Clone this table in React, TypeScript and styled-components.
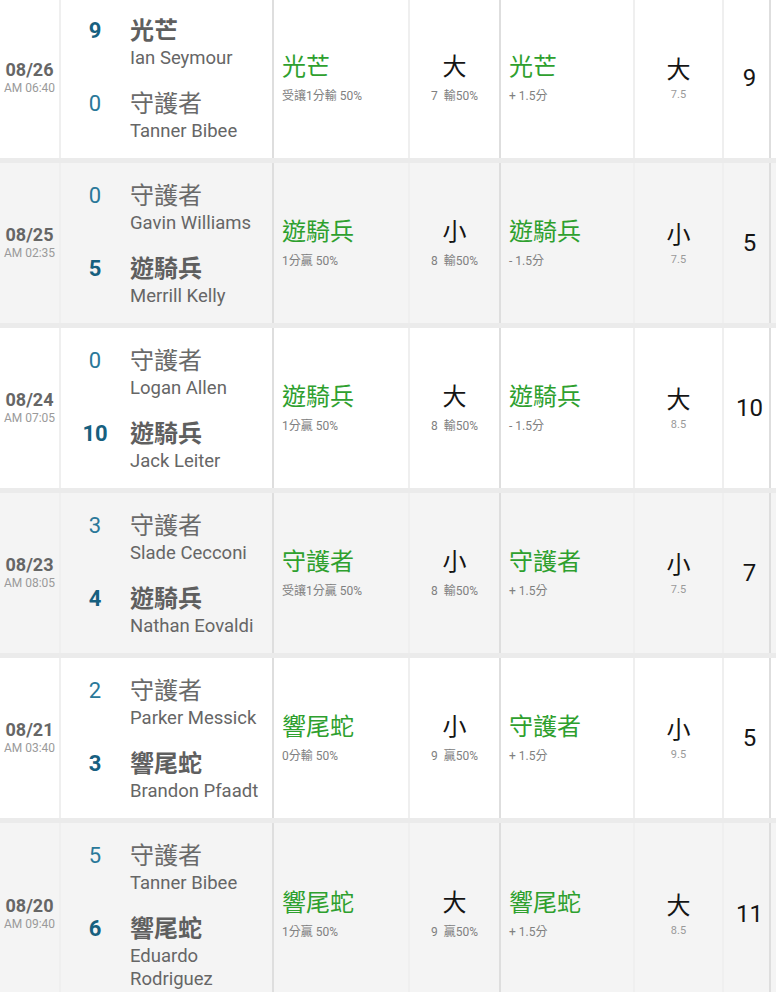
import * as React from "react";
import styled, { createGlobalStyle } from "styled-components";

interface Side {
  score: number;
  team: string;
  pitcher: string;
  won: boolean;
}

interface Game {
  date: string;
  time: string;
  away: Side;
  home: Side;
  spreadPick: string;
  spreadNote: string;
  totalPick: string;
  totalNote: string;
  linePick: string;
  lineNote: string;
  ouPick: string;
  ouLine: string;
  runs: number;
}

const games: Game[] = [
  {
    date: "08/26",
    time: "AM 06:40",
    away: { score: 9, team: "光芒", pitcher: "Ian Seymour", won: true },
    home: { score: 0, team: "守護者", pitcher: "Tanner Bibee", won: false },
    spreadPick: "光芒",
    spreadNote: "受讓1分輸 50%",
    totalPick: "大",
    totalNote: "7  輸50%",
    linePick: "光芒",
    lineNote: "+ 1.5分",
    ouPick: "大",
    ouLine: "7.5",
    runs: 9,
  },
  {
    date: "08/25",
    time: "AM 02:35",
    away: { score: 0, team: "守護者", pitcher: "Gavin Williams", won: false },
    home: { score: 5, team: "遊騎兵", pitcher: "Merrill Kelly", won: true },
    spreadPick: "遊騎兵",
    spreadNote: "1分贏 50%",
    totalPick: "小",
    totalNote: "8  輸50%",
    linePick: "遊騎兵",
    lineNote: "- 1.5分",
    ouPick: "小",
    ouLine: "7.5",
    runs: 5,
  },
  {
    date: "08/24",
    time: "AM 07:05",
    away: { score: 0, team: "守護者", pitcher: "Logan Allen", won: false },
    home: { score: 10, team: "遊騎兵", pitcher: "Jack Leiter", won: true },
    spreadPick: "遊騎兵",
    spreadNote: "1分贏 50%",
    totalPick: "大",
    totalNote: "8  輸50%",
    linePick: "遊騎兵",
    lineNote: "- 1.5分",
    ouPick: "大",
    ouLine: "8.5",
    runs: 10,
  },
  {
    date: "08/23",
    time: "AM 08:05",
    away: { score: 3, team: "守護者", pitcher: "Slade Cecconi", won: false },
    home: { score: 4, team: "遊騎兵", pitcher: "Nathan Eovaldi", won: true },
    spreadPick: "守護者",
    spreadNote: "受讓1分贏 50%",
    totalPick: "小",
    totalNote: "8  輸50%",
    linePick: "守護者",
    lineNote: "+ 1.5分",
    ouPick: "小",
    ouLine: "7.5",
    runs: 7,
  },
  {
    date: "08/21",
    time: "AM 03:40",
    away: { score: 2, team: "守護者", pitcher: "Parker Messick", won: false },
    home: { score: 3, team: "響尾蛇", pitcher: "Brandon Pfaadt", won: true },
    spreadPick: "響尾蛇",
    spreadNote: "0分輸 50%",
    totalPick: "小",
    totalNote: "9  贏50%",
    linePick: "守護者",
    lineNote: "+ 1.5分",
    ouPick: "小",
    ouLine: "9.5",
    runs: 5,
  },
  {
    date: "08/20",
    time: "AM 09:40",
    away: { score: 5, team: "守護者", pitcher: "Tanner Bibee", won: false },
    home: { score: 6, team: "響尾蛇", pitcher: "Eduardo Rodriguez", won: true },
    spreadPick: "響尾蛇",
    spreadNote: "1分贏 50%",
    totalPick: "大",
    totalNote: "9  贏50%",
    linePick: "響尾蛇",
    lineNote: "+ 1.5分",
    ouPick: "大",
    ouLine: "8.5",
    runs: 11,
  },
];

const GlobalStyle = createGlobalStyle`
  html, body {
    margin: 0;
    padding: 0;
    background: #ffffff;
  }
  body {
    font-family: Roboto, "Noto Sans CJK TC", sans-serif;
  }
`;

const Viewport = styled.div`
  width: 776px;
  height: 992px;
  overflow: hidden;
`;

const Table = styled.div`
  width: 820px;
  margin-top: -2px;
`;

const Row = styled.div<{ $shade: boolean }>`
  display: grid;
  grid-template-columns: 61px 213px 136px 91px 134px 89px 47px 49px;
  min-height: 160px;
  background: ${(p) => (p.$shade ? "#f4f4f4" : "#ffffff")};
  border-bottom: 5px solid #ebebeb;
`;

const Cell = styled.div<{ $strong?: boolean; $align?: string }>`
  box-sizing: border-box;
  display: flex;
  flex-direction: column;
  justify-content: center;
  align-items: ${(p) => p.$align || "center"};
  border-right: 2px solid ${(p) => (p.$strong ? "#dedede" : "#efefef")};
`;

const Day = styled.div`
  font-size: 18px;
  line-height: 20px;
  font-weight: 700;
  color: #666666;
`;

const Time = styled.div`
  font-size: 12px;
  line-height: 16px;
  color: #9a9a9a;
`;

const TeamsCell = styled(Cell)`
  align-items: stretch;
  justify-content: flex-start;
  padding: 18px 0 14px;
  gap: 19px;
`;

const TeamBlock = styled.div`
  display: grid;
  grid-template-columns: 40px 1fr;
  column-gap: 15px;
  padding-left: 14px;
  padding-right: 6px;
`;

const Score = styled.div<{ $won: boolean }>`
  font-size: 22px;
  line-height: 30px;
  text-align: center;
  font-weight: ${(p) => (p.$won ? 700 : 400)};
  color: ${(p) => (p.$won ? "#17607f" : "#2a7899")};
`;

const TeamInfo = styled.div`
  display: flex;
  flex-direction: column;
`;

const TeamName = styled.div<{ $won: boolean }>`
  font-size: 24px;
  line-height: 30px;
  font-weight: ${(p) => (p.$won ? 700 : 400)};
  color: ${(p) => (p.$won ? "#5f5f5f" : "#6a6a6a")};
`;

const Pitcher = styled.div`
  font-size: 18.5px;
  line-height: 23px;
  margin-top: 1px;
  color: #666666;
`;

const PickCell = styled(Cell)`
  padding-left: 8px;
`;

const GreenPick = styled.div`
  font-size: 24px;
  line-height: 30px;
  color: #2ea02e;
`;

const BlackPick = styled.div`
  font-size: 24px;
  line-height: 30px;
  color: #151515;
`;

const Note = styled.div`
  margin-top: 6px;
  font-size: 12px;
  line-height: 16px;
  color: #808080;
  white-space: pre;
`;

const LineNote = styled.div`
  margin-top: 2px;
  font-size: 11px;
  line-height: 16px;
  color: #9a9a9a;
`;

const OuCell = styled(Cell)`
  padding-top: 2px;
`;

const RunsCell = styled(Cell)`
  padding-left: 6px;
`;

const Runs = styled.div`
  font-size: 24px;
  line-height: 30px;
  color: #151515;
`;

const TeamLine = ({ side }: { side: Side }) => (
  <TeamBlock>
    <Score $won={side.won}>{side.score}</Score>
    <TeamInfo>
      <TeamName $won={side.won}>{side.team}</TeamName>
      <Pitcher>{side.pitcher}</Pitcher>
    </TeamInfo>
  </TeamBlock>
);

const GameRow = ({ game, shade }: { game: Game; shade: boolean }) => (
  <Row $shade={shade}>
    <Cell>
      <Day>{game.date}</Day>
      <Time>{game.time}</Time>
    </Cell>
    <TeamsCell $strong>
      <TeamLine side={game.away} />
      <TeamLine side={game.home} />
    </TeamsCell>
    <PickCell $align="flex-start">
      <GreenPick>{game.spreadPick}</GreenPick>
      <Note>{game.spreadNote}</Note>
    </PickCell>
    <Cell $strong>
      <BlackPick>{game.totalPick}</BlackPick>
      <Note>{game.totalNote}</Note>
    </Cell>
    <PickCell $align="flex-start">
      <GreenPick>{game.linePick}</GreenPick>
      <Note>{game.lineNote}</Note>
    </PickCell>
    <OuCell>
      <BlackPick>{game.ouPick}</BlackPick>
      <LineNote>{game.ouLine}</LineNote>
    </OuCell>
    <RunsCell $strong>
      <Runs>{game.runs}</Runs>
    </RunsCell>
    <Cell />
  </Row>
);

export default function App() {
  return (
    <>
      <GlobalStyle />
      <Viewport>
        <Table>
          {games.map((g, i) => (
            <GameRow key={g.date} game={g} shade={i % 2 === 1} />
          ))}
        </Table>
      </Viewport>
    </>
  );
}
